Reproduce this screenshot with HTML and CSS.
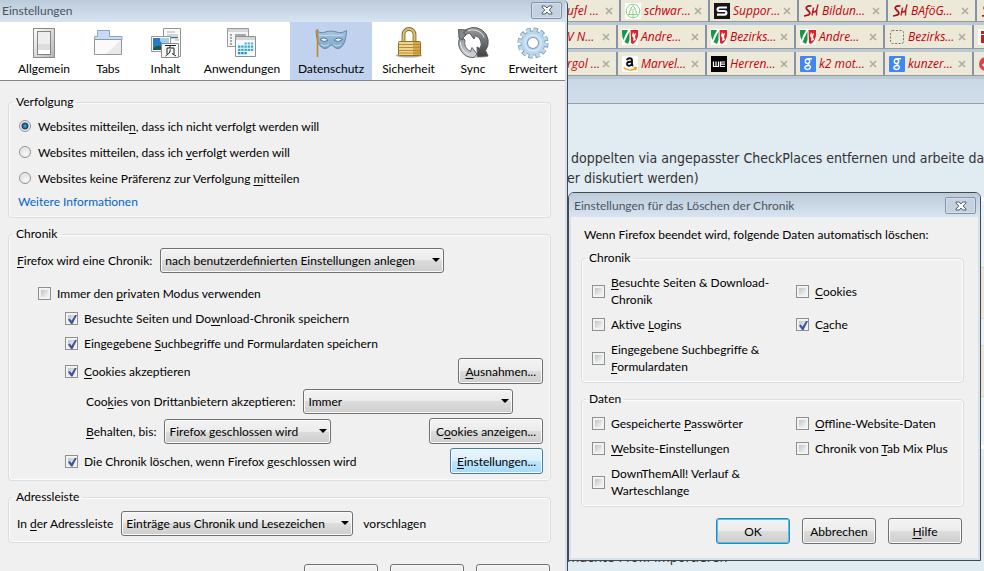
FILE: index.html
```html
<!DOCTYPE html>
<html lang="de">
<head>
  <meta charset="UTF-8">
  <title>Einstellungen</title>
  <link rel="stylesheet" href="styles.css">
</head>
<body>

<!-- shared icons -->
<svg class="defs" aria-hidden="true">
  <symbol id="i-close" viewBox="0 0 12 10">
    <path d="M1 1h3.200L6 3l1.800-2H11v1L8.200 5 11 8v1H7.800L6 7 4.200 9H1V8l2.800-3L1 2z" fill="#fff" stroke="#535e6c" stroke-width="1"/>
  </symbol>
  <symbol id="i-x" viewBox="0 0 8 8">
    <path d="M1 1l6 6M7 1L1 7" stroke="#aeaca0" stroke-width="1.600"/>
  </symbol>
  <symbol id="i-tree" viewBox="0 0 16 16">
    <rect width="16" height="16" fill="#fff"/>
    <circle cx="8" cy="8" r="6.800" fill="none" stroke="#8fce8a"/>
    <path d="M8 2.500L5.500 6h1L4 9h1.200L3.500 11.500h9L10.800 9H12L9.500 6h1zM8 6v9" fill="none" stroke="#8fce8a"/>
  </symbol>
  <symbol id="i-s" viewBox="0 0 16 16">
    <rect width="16" height="16" fill="#15151a"/>
    <path d="M13 4.500H5.500C3 4.500 3 8 5.500 8h5C13 8 13 11.700 10.500 11.700H3" fill="none" stroke="#fff" stroke-width="2.200"/>
  </symbol>
  <symbol id="i-sh" viewBox="0 0 16 16">
    <path d="M8.500 3C4 2.500 1.500 4.500 4.500 7s4.500 5-3.500 6" fill="none" stroke="#a80f1c" stroke-width="1.700"/>
    <path d="M10.500 4.500c-.5 3-.8 5-1.500 8M9 9.500c2.500-.2 4-1 5-2.500M15 1.500c-1.300 4-1.800 7-1.500 11" fill="none" stroke="#b5202c" stroke-width="1.400"/>
  </symbol>
  <symbol id="i-nrw" viewBox="0 0 16 16">
    <rect width="16" height="16" fill="#fff"/>
    <path d="M0 1h6L1.500 11Q0 8 0 5z" fill="#16984a"/>
    <path d="M2.500 13L7.500 2v9L6 15z" fill="#16984a"/>
    <path d="M8.500 1H16v5q0 5-5 9l-2-1z" fill="#e2202c"/>
    <path d="M11 3l1 2 2-1-1 4 1 3-3 1 .5-3L10 7z" fill="#fff"/>
    <path d="M3 9Q4 6 5 5T7 2" fill="none" stroke="#fff" stroke-width="1.300"/>
  </symbol>
  <symbol id="i-amazon" viewBox="0 0 16 16">
    <rect width="16" height="16" rx="2" fill="#fff"/>
    <path d="M5 4.200C5.500 1.600 10 1.600 10 4.200V8q0 1 1 2M10 5.500C6 5.500 5 6.500 5 8c0 2.400 4 2.400 5-.5" fill="none" stroke="#111" stroke-width="1.900"/>
    <path d="M1.500 11.500c4 3.200 8.500 3.200 12 .8M11.500 11.500l2.700.2-.6 2.600" fill="none" stroke="#f79a1c" stroke-width="1.400"/>
  </symbol>
  <symbol id="i-we" viewBox="0 0 16 16">
    <rect width="16" height="16" fill="#000"/>
    <path d="M2.500 5.500v5h5v-5M5 5.500v5M14 6H9.500v4.500H14M9.500 8.200H14" fill="none" stroke="#fff" stroke-width="1.200"/>
  </symbol>
  <symbol id="i-google" viewBox="0 0 16 16">
    <rect width="16" height="16" rx="1" fill="#4286f4"/>
    <circle cx="7.500" cy="5.200" r="2.200" fill="none" stroke="#fff" stroke-width="1.400"/>
    <path d="M12 2.700H7.500M9 7.300q-2 .5-.5 1.600c3.500 2.200 1.500 4.600-1 4.600-3.400 0-4-3.600 1-4" fill="none" stroke="#fff" stroke-width="1.400"/>
  </symbol>
  <symbol id="i-blank" viewBox="0 0 16 16">
    <rect x="1.500" y="1.500" width="13" height="13" rx="2" fill="none" stroke="#77756c" stroke-dasharray="2 1.500"/>
  </symbol>
</svg>

<!-- browser in the background -->
<div class="browser">
  <div class="tab-row shifted">
    <div class="tab cut"><span>ufel ...</span><svg class="x"><use href="#i-x"/></svg></div>
    <div class="tab"><svg class="fav"><use href="#i-tree"/></svg><span>schwar...</span><svg class="x"><use href="#i-x"/></svg></div>
    <div class="tab"><svg class="fav"><use href="#i-s"/></svg><span>Suppor...</span><svg class="x"><use href="#i-x"/></svg></div>
    <div class="tab"><svg class="fav"><use href="#i-sh"/></svg><span>Bildun...</span><svg class="x"><use href="#i-x"/></svg></div>
    <div class="tab"><svg class="fav"><use href="#i-sh"/></svg><span>BAföG...</span><svg class="x"><use href="#i-x"/></svg></div>
    <div class="tab"><svg class="fav"><use href="#i-sh"/></svg></div>
  </div>
  <div class="tab-row">
    <div class="tab cut"><span>V N...</span><svg class="x"><use href="#i-x"/></svg></div>
    <div class="tab"><svg class="fav"><use href="#i-nrw"/></svg><span>Andre...</span><svg class="x"><use href="#i-x"/></svg></div>
    <div class="tab"><svg class="fav"><use href="#i-nrw"/></svg><span>Bezirks...</span><svg class="x"><use href="#i-x"/></svg></div>
    <div class="tab"><svg class="fav"><use href="#i-nrw"/></svg><span>Andre...</span><svg class="x"><use href="#i-x"/></svg></div>
    <div class="tab"><svg class="fav"><use href="#i-blank"/></svg><span>Bezirks...</span><svg class="x"><use href="#i-x"/></svg></div>
    <div class="tab"><svg class="fav" viewBox="0 0 16 16"><rect width="16" height="16" fill="#fff"/><path d="M3 2h4v3H3zM3 6h9v3H7v5H3z" fill="#d8141c"/></svg></div>
  </div>
  <div class="tab-row">
    <div class="tab cut"><span>rgol ...</span><svg class="x"><use href="#i-x"/></svg></div>
    <div class="tab"><svg class="fav"><use href="#i-amazon"/></svg><span>Marvel...</span><svg class="x"><use href="#i-x"/></svg></div>
    <div class="tab"><svg class="fav"><use href="#i-we"/></svg><span>Herren...</span><svg class="x"><use href="#i-x"/></svg></div>
    <div class="tab"><svg class="fav"><use href="#i-google"/></svg><span>k2 mot...</span><svg class="x"><use href="#i-x"/></svg></div>
    <div class="tab"><svg class="fav"><use href="#i-google"/></svg><span>kunzer...</span><svg class="x"><use href="#i-x"/></svg></div>
    <div class="tab"><svg class="fav" viewBox="0 0 16 16"><circle cx="8" cy="8" r="7" fill="#e04048"/><path d="M4 9l5-5 3 2-5 6z" fill="#fff"/></svg></div>
  </div>
  <div class="toolbar"></div>
  <div class="page">
    <p>doppelten via angepasster CheckPlaces entfernen und arbeite da</p>
    <p class="tight">er diskutiert werden)</p>
    <div class="posts">
      <div class="post"></div>
      <div class="post beige"></div>
      <div class="post short"></div>
      <div class="post beige"></div>
      <div class="post last"></div>
    </div>
    <p class="tight more">machte Profil importieren</p>
  </div>
</div>

<!-- main settings window -->
<div class="window prefs">
  <div class="titlebar">
    <span>Einstellungen</span>
    <button class="close" aria-label="Schließen"><svg><use href="#i-close"/></svg></button>
  </div>

  <div class="categories">
    <a href="#">
      <svg viewBox="0 0 32 32">
        <defs><linearGradient id="g1" x2="1" y2="1"><stop offset="0" stop-color="#fff"/><stop offset="1" stop-color="#b4b4b4"/></linearGradient></defs>
        <rect x="5.500" y="1.500" width="21" height="29" fill="url(#g1)" stroke="#8b8b8b"/>
        <rect x="9.500" y="4.500" width="13" height="23" fill="#f8f8f8" stroke="#858585"/>
        <path d="M10 17h12v6H10z" fill="#ddd"/><path d="M10 23h12v4H10z" fill="#fff"/>
        <path d="M10 5h12v12H10z" fill="#eee"/>
      </svg>
      Allgemein
    </a>
    <a href="#">
      <svg viewBox="0 0 32 32">
        <path d="M2.500 13V9.500h3v-6h12v6h12.500V13z" fill="#c5dbf7" stroke="#8aa5cb"/>
        <path d="M2.500 12.500h27v15h-27z" fill="#eaeaea" stroke="#979797"/>
        <path d="M3 27V13h26L14 27z" fill="#fafafa"/>
      </svg>
      Tabs
    </a>
    <a href="#">
      <svg viewBox="0 0 32 32">
        <path d="M13.500 1.500h17v28h-17z" fill="#fafafa" stroke="#949494"/>
        <path d="M17 5h8M17 8h11M25 13h4" stroke="#a9b0bc"/><path d="M17 10.500h11" stroke="#35777c" stroke-width="1.500"/>
        <path d="M1.500 9.500h19v15h-19z" fill="#fff" stroke="#999"/>
        <path d="M3 11h16v12H3z" fill="#2c78c8"/><path d="M10 11h9v8q-6-1-9-5z" fill="#9fd0ee"/><path d="M3 21q5-4 10-1v3H3z" fill="#175b47"/>
        <path d="M11.500 16.500h17v14h-17z" fill="#f7f7f7" stroke="#888"/>
        <path d="M15 18.500h11M20.500 18.500l-1 2.500M17 27v-6h7v6M20.500 22.500q0 4-5 6.500M22 26.500l4 2.500" fill="none" stroke="#222"/>
      </svg>
      Inhalt
    </a>
    <a href="#">
      <svg viewBox="0 0 32 32">
        <path d="M1.500 1.500h21v18h-21z" fill="#f5f5f5" stroke="#999"/>
        <path d="M2 2h20v3H2z" fill="#d5d7dc"/>
        <path d="M4 8h2M4 11h2M4 14h2M4 17h2M9 8h11" stroke="#8b8f99" stroke-width="1.500"/>
        <path d="M9.500 9.500h20v20h-20z" fill="#f7f9fa" stroke="#8d9093"/>
        <path d="M10 10h19v3H10z" fill="#d3d5d8"/>
        <path d="M18.400 16.500H28" stroke="#5bb9d4" stroke-width="2.200" stroke-dasharray="2.400 .8"/>
        <path d="M12 19.700h16M12 22.900h16" stroke="#35a9cc" stroke-width="2.200" stroke-dasharray="2.400 .8"/>
        <path d="M12 26.100h9" stroke="#1a94bd" stroke-width="2.200" stroke-dasharray="2.400 .8"/>
      </svg>
      Anwendungen
    </a>
    <a href="#" class="active">
      <svg viewBox="0 0 32 32">
        <defs><linearGradient id="g2" x2="0" y2="1"><stop offset="0" stop-color="#a4c3df"/><stop offset="1" stop-color="#7ea7cb"/></linearGradient></defs>
        <path d="M1 3.500C4 6 8 6 11 4.800c3-.9 7-.9 10 0 3 1.200 7 1.200 10.500-1.300C31 13 28.500 21 23 21.500c-3.500.3-4.500-3.500-6.500-3.500s-3 3.500-6.500 3.500C4 21 1.500 13 1 3.500z" fill="url(#g2)" stroke="#6288ab"/>
        <path d="M5 12.500q4.500-3.500 8 1-4.500 2.500-8-1zM19 13.500q3.500-4.500 8.500-1-3.500 3.500-8.500 1z" fill="#f2f7fc" stroke="#4c7195"/>
        <path d="M4 8q6 1.500 12 0 6 1.500 12 0M6 17q4 4 8 0M18 17q4 4 8 0" fill="none" stroke="#c9ddef"/>
        <path d="M2.500 2v28" stroke="#c28a25" stroke-width="1.600"/>
      </svg>
      Datenschutz
    </a>
    <a href="#">
      <svg viewBox="0 0 32 32">
        <ellipse cx="16" cy="28.500" rx="13" ry="2" fill="#aaa"/>
        <path d="M10.500 15V7.500a5.500 5.500 0 0 1 11 0V15" fill="none" stroke="#86692a" stroke-width="3.800"/>
        <path d="M10.500 15V7.500a5.500 5.500 0 0 1 11 0V15" fill="none" stroke="#dcc27a" stroke-width="2"/>
        <rect x="5.500" y="14.500" width="22" height="14" rx="1" fill="#d3a848" stroke="#967026"/>
        <path d="M6 15h14v13H6z" fill="#efd58b"/>
        <path d="M6 17.500h21M6 20.500h21M6 23.500h21M6 26h21" stroke="#b78c37"/>
      </svg>
      Sicherheit
    </a>
    <a href="#">
      <svg viewBox="0 0 32 32">
        <defs>
          <linearGradient id="g3" x2="0" y2="1"><stop offset="0" stop-color="#8e9092"/><stop offset="1" stop-color="#d4d6d7"/></linearGradient>
          <linearGradient id="g4" x2="0" y2="1"><stop offset="0" stop-color="#9a9c9e"/><stop offset="1" stop-color="#3f4245"/></linearGradient>
        </defs>
        <ellipse cx="20" cy="29" rx="11" ry="2" fill="#ccc"/>
        <path d="M17 30.500A14.500 14.500 0 0 1 3.500 9L8 13A9.500 9.500 0 0 0 13.500 24.500L15 20.500 20 27z" fill="url(#g3)" stroke="#63666a"/>
        <path d="M5 6.500A14.500 14.500 0 0 1 28.500 23.500l2.500 5.500-10.500.5-.5-9.500 3 1.500A9 9 0 0 0 18.500 8.500L17 12 12.500 6 5 9z" fill="url(#g4)" stroke="#55585b"/>
        <path d="M1.500 2.500l8 .5-3 3 2.500 2q-3 2-3.500 5L2 11z" fill="#84878a" stroke="#55585b"/>
        <path d="M11 3.500c7-2 14 1 16 7M3.500 15c0 6 4 11 9 13" fill="none" stroke="#e6e8e9"/>
      </svg>
      Sync
    </a>
    <a href="#">
      <svg viewBox="0 0 32 32">
        <circle cx="16" cy="16" r="13.300" fill="none" stroke="#7d9dba" stroke-width="4.500" stroke-dasharray="4.400 2.564"/>
        <circle cx="16" cy="16" r="8.700" fill="none" stroke="#7d9dba" stroke-width="7.400"/>
        <circle cx="16" cy="16" r="12.800" fill="none" stroke="#bcd6ec" stroke-width="4" stroke-dasharray="3.400 3.302"/>
        <circle cx="16" cy="16" r="8.800" fill="none" stroke="#bcd6ec" stroke-width="5.600"/>
        <circle cx="16" cy="16" r="8" fill="none" stroke="#d9e8f5" stroke-width="1.500"/>
      </svg>
      Erweitert
    </a>
  </div>

  <div class="content">
    <fieldset>
      <legend>Verfolgung</legend>
      <label class="radio-row"><input type="radio" name="track" checked><span>Websites mitteile<u>n</u>, dass ich nicht verfolgt werden will</span></label>
      <label class="radio-row"><input type="radio" name="track"><span>Websites mitteilen, dass ich <u>v</u>erfolgt werden will</span></label>
      <label class="radio-row"><input type="radio" name="track"><span>Websites keine Präferenz zur Verfolgung <u>m</u>itteilen</span></label>
      <a class="link" href="#">Weitere Informationen</a>
    </fieldset>

    <fieldset>
      <legend>Chronik</legend>
      <div class="row mode">
        <label for="mode"><span><u>F</u>irefox wird eine Chronik:</span></label>
        <span class="select mode-select"><select id="mode"><option>nach benutzerdefinierten Einstellungen anlegen</option></select></span>
      </div>
      <div class="row small in1">
        <label><input type="checkbox"><span>Immer den <u>p</u>rivaten Modus verwenden</span></label>
      </div>
      <div class="row small in2">
        <label><input type="checkbox" checked><span>Besuchte Seiten und Do<u>w</u>nload-Chronik speichern</span></label>
      </div>
      <div class="row small in2">
        <label><input type="checkbox" checked><span>Eingegebene <u>S</u>uchbegriffe und Formulardaten speichern</span></label>
      </div>
      <div class="row in2">
        <label><input type="checkbox" checked><span><u>C</u>ookies akzeptieren</span></label>
        <button class="btn"><u>A</u>usnahmen...</button>
      </div>
      <div class="row in3">
        <label for="third"><span>Coo<u>k</u>ies von Drittanbietern akzeptieren:</span></label>
        <span class="select third-select"><select id="third"><option>Immer</option></select></span>
      </div>
      <div class="row in3">
        <label for="keep"><span><u>B</u>ehalten, bis:</span></label>
        <span class="select keep-select"><select id="keep"><option>Firefox geschlossen wird</option></select></span>
        <button class="btn">C<u>o</u>okies anzeigen...</button>
      </div>
      <div class="row in2">
        <label><input type="checkbox" checked><span>Die Chronik löschen, wenn Firefox <u>g</u>eschlossen wird</span></label>
        <button class="btn hot"><u>E</u>instellungen...</button>
      </div>
    </fieldset>

    <fieldset>
      <legend>Adressleiste</legend>
      <div class="row">
        <label for="bar"><span>In <u>d</u>er Adressleiste</span></label>
        <span class="select bar-select"><select id="bar"><option>Einträge aus Chronik und Lesezeichen</option></select></span>
        <span class="suffix">vorschlagen</span>
      </div>
    </fieldset>

    <div class="buttons">
      <button class="btn wide" aria-label="OK"></button>
      <button class="btn wide" aria-label="Abbrechen"></button>
      <button class="btn wide" aria-label="Hilfe"></button>
    </div>
  </div>
</div>

<!-- clear history dialog -->
<div class="window dialog">
  <div class="titlebar">
    <span>Einstellungen für das Löschen der Chronik</span>
    <button class="close" aria-label="Schließen"><svg><use href="#i-close"/></svg></button>
  </div>
  <div class="content">
    <p>Wenn Firefox beendet wird, folgende Daten automatisch löschen:</p>
    <fieldset>
      <legend>Chronik</legend>
      <div class="checks">
        <label><input type="checkbox"><span><u>B</u>esuchte Seiten &amp; Download-<br>Chronik</span></label>
        <label><input type="checkbox"><span><u>C</u>ookies</span></label>
        <label><input type="checkbox"><span>Aktive <u>L</u>ogins</span></label>
        <label><input type="checkbox" checked><span>C<u>a</u>che</span></label>
        <label><input type="checkbox"><span>Eingegebene Suchbegriffe &amp;<br><u>F</u>ormulardaten</span></label>
      </div>
    </fieldset>
    <fieldset>
      <legend>Daten</legend>
      <div class="checks">
        <label><input type="checkbox"><span>Gespeicherte <u>P</u>asswörter</span></label>
        <label><input type="checkbox"><span><u>O</u>ffline-Website-Daten</span></label>
        <label><input type="checkbox"><span><u>W</u>ebsite-Einstellungen</span></label>
        <label><input type="checkbox"><span>Chronik von <u>T</u>ab Mix Plus</span></label>
        <label><input type="checkbox"><span>DownThemAll! Verlauf &amp;<br>Warteschlange</span></label>
      </div>
    </fieldset>
    <div class="buttons">
      <button class="btn wide default">OK</button>
      <button class="btn wide">Abbrechen</button>
      <button class="btn wide"><u>H</u>ilfe</button>
    </div>
  </div>
</div>

</body>
</html>
```
FILE: styles.css
```css
* {
  box-sizing: border-box;
}
body {
  margin: 0;
  height: 100vh;
  position: relative;
  overflow: hidden;
  background-color: #e0ebf2;
  font-family: Lato, "Segoe UI", sans-serif;
  font-size: 12px;
  line-height: 17px;
  color: #000;
}
.defs {
  display: none;
}
button, select, input {
  font: inherit;
  color: inherit;
  margin: 0;
}
p {
  margin: 0;
}
u {
  text-underline-offset: 2px;
}

/* browser */
.browser {
  margin-left: 567px;
  height: 100%;
  overflow: hidden;
}
.tab-row {
  display: flex;
  height: 27px;
  padding-bottom: 3px;
  background-color: #b9c9da;
  font: italic 12px/24px "Open Sans", sans-serif;
  color: #c4000a;
}
.tab-row.shifted {
  height: 25px;
}
.tab-row.shifted .cut {
  width: 54px;
}
.tab {
  flex: none;
  width: 89px;
  display: flex;
  align-items: center;
  padding: 0 6px 0 4px;
  background-color: #ece9d8;
  border-right: 2px solid #8592a8;
  border-bottom: 1px solid #9a9a92;
  white-space: nowrap;
}
.tab.cut {
  width: 51px;
  padding-left: 0;
}
.tab span {
  margin-left: 3px;
}
.tab.cut span {
  margin-left: 0;
}
.fav {
  flex: none;
  width: 16px;
  height: 16px;
}
.x {
  flex: none;
  width: 8px;
  height: 8px;
  margin-left: auto;
}
.toolbar {
  height: 25px;
  background: linear-gradient(#c9d6e4, #d1deea);
  border-bottom: 1px solid #8fa1b5;
}
.page {
  padding-top: 44px;
  font: 14px/20px "DejaVu Sans Condensed", "Trebuchet MS", sans-serif;
  color: #333;
  white-space: nowrap;
}
.page p {
  padding-left: 4px;
}
.page .tight {
  padding-left: 0;
}
.posts {
  margin-top: 9px;
  border: solid #fff;
  border-width: 4px 0;
}
.post {
  height: 66px;
  background-color: #e9f2f8;
}
.post.beige {
  height: 52px;
  background-color: #ebe7d8;
  border: solid #d6d5cc;
  border-width: 1px 0;
}
.post.short {
  height: 26px;
}
.post.last {
  height: 48px;
}
.page .more {
  margin-top: 98px;
}

/* windows */
.window {
  position: absolute;
  background-color: #f0f0f0;
  border: 1px solid #45484d;
  box-shadow: inset 0 0 0 2px #d6e2ee;
}
.prefs {
  left: 0;
  top: 0;
  width: 568px;
  height: 100%;
  overflow: hidden;
  border-width: 0 1px 0 0;
  border-top-right-radius: 5px;
  padding-right: 2px;
  box-shadow: inset -2px 0 #d6e2ee;
}
.dialog {
  left: 568px;
  top: 192px;
  width: 413px;
  border-radius: 6px 6px 0 0;
  padding-bottom: 2px;
}
.titlebar {
  display: flex;
  justify-content: space-between;
  align-items: center;
  height: 22px;
  padding: 0 3px 2px 2px;
  background: linear-gradient(#bccbda, #d7e4f1);
  color: #4a545f;
}
.dialog .titlebar {
  height: 24px;
  padding: 1px 4px 0 5px;
  border-radius: 5px 5px 0 0;
}
.close {
  width: 31px;
  height: 17px;
  padding: 0;
  display: flex;
  align-items: center;
  justify-content: center;
  background-color: #c3d1e0;
  border: 1px solid #8493a8;
  border-radius: 2px;
  box-shadow: inset 0 0 0 1px #d5e0ec;
}
.close svg {
  width: 12px;
  height: 10px;
}

.categories {
  display: grid;
  grid-template-columns: 70fr 58fr 57fr 96fr 82fr 73fr 56fr 64fr;
  height: 59px;
  padding-left: 9px;
  background-color: #fff;
  border-bottom: 1px solid #858585;
}
.categories a {
  display: flex;
  flex-direction: column;
  align-items: center;
  padding-top: 5px;
  color: #000;
  text-decoration: none;
}
.categories a.active {
  background-color: #c1d2ee;
}
.categories svg {
  width: 32px;
  height: 32px;
  margin-bottom: 1px;
}

.prefs .content {
  padding: 13px 14px 0 8px;
}
fieldset {
  margin: 0 0 8px;
  padding: 3px 7px 4px 8px;
  min-width: 0;
  border: 1px solid #d5dfe5;
  border-radius: 4px;
  box-shadow: inset 0 0 0 1px #fbfbfb;
}
legend {
  padding: 0 3px;
  margin-left: -4px;
  line-height: 16px;
}
label {
  display: flex;
  align-items: center;
}
.radio-row {
  height: 26px;
  padding-left: 2px;
}
.radio-row span {
  margin-left: 7px;
}
.link {
  display: block;
  width: fit-content;
  padding-left: 1px;
  line-height: 22px;
  color: #0066cc;
  text-decoration: none;
}

input[type="radio"] {
  appearance: none;
  flex: none;
  width: 12px;
  height: 12px;
  border: 1px solid #8e8f8f;
  border-radius: 50%;
  background: radial-gradient(circle at 60% 65%, #fafafa, #cfd3d8);
  box-shadow: inset 0 0 0 1px #f4f4f4;
}
input[type="radio"]:checked {
  background: radial-gradient(circle at 50% 50%, #4fb4de 0, #123f66 3px, #dfe6ec 4px);
}
input[type="checkbox"] {
  appearance: none;
  flex: none;
  display: grid;
  place-items: center;
  width: 13px;
  height: 13px;
  border: 1px solid #8e8f8f;
  background: linear-gradient(135deg, #c0c4ca, #f6f6f6) content-box;
  padding: 2px;
  box-shadow: inset 0 0 0 1px #f4f4f4;
}
input[type="checkbox"]:checked::after {
  content: "";
  width: 9px;
  height: 9px;
  background-color: #3c549c;
  clip-path: polygon(0 50%, 20% 40%, 40% 65%, 78% 0, 100% 0, 50% 100%, 34% 100%);
}

.row {
  display: flex;
  align-items: center;
  height: 30px;
}
.row.small {
  height: 25px;
}
.row input + span {
  margin-left: 6px;
}
.row .btn {
  margin-left: auto;
}
.mode {
  margin-bottom: 6px;
}
.in1 {
  padding-left: 21px;
}
.in2 {
  padding-left: 48px;
}
.in3 {
  padding-left: 69px;
}
.select {
  position: relative;
  margin-left: 8px;
}
.select::after {
  content: "";
  position: absolute;
  right: 4px;
  top: 10px;
  border: 4px solid transparent;
  border-top-color: #000;
  border-bottom: 0;
  pointer-events: none;
}
select {
  appearance: none;
  display: block;
  width: 100%;
  height: 25px;
  padding: 0 16px 0 4px;
}
select, .btn {
  border: 1px solid #707070;
  border-radius: 3px;
  background: linear-gradient(#f3f3f3, #ebebeb 50%, #dcdcdc 50%, #cecece);
  box-shadow: inset 0 0 0 1px #fafafa;
}
.mode-select {
  width: 284px;
}
.third-select {
  width: 210px;
}
.keep-select {
  width: 167px;
}
.bar-select {
  width: 232px;
}
.suffix {
  margin-left: 10px;
}
.btn {
  height: 26px;
  padding: 0 6px;
  white-space: nowrap;
}
.btn.wide {
  width: 74px;
}
.btn.hot {
  border-color: #3c7fb1;
  background: linear-gradient(#eaf6fd, #d9f0fc 50%, #bee6fd 50%, #a7d9f5);
}
.btn.default {
  border-color: #3c7fb1;
  box-shadow: inset 0 0 0 1px #3fc8f4;
}
.buttons {
  display: flex;
  justify-content: flex-end;
  gap: 12px;
}
.prefs .buttons {
  margin-top: 21px;
  padding-right: 1px;
}

.dialog .content {
  padding: 9px 16px 14px 12px;
}
.dialog p {
  padding-left: 3px;
  margin-bottom: 7px;
}
.dialog fieldset {
  padding: 8px 8px 7px 10px;
}
.dialog legend {
  margin-left: -6px;
}
.checks {
  display: grid;
  grid-template-columns: 204px 1fr;
  row-gap: 8px;
}
.checks span {
  margin-left: 6px;
}
.dialog .buttons {
  margin-top: 11px;
  padding-right: 2px;
}
```
